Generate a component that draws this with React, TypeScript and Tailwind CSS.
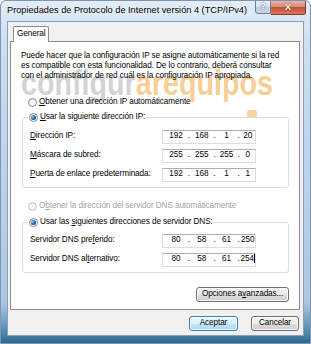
import React from 'react';

type Field = { label: React.ReactNode; parts: string[]; caret?: boolean };

function Radio({ checked, disabled }: { checked?: boolean; disabled?: boolean }) {
  return (
    <span
      className={`flex items-center justify-center w-[9px] h-[9px] rounded-full border shrink-0 ${
        disabled
          ? 'border-[#c4c4c4] bg-[#f4f4f4]'
          : 'border-[#7f8b96] bg-[linear-gradient(135deg,#e2e4e7,#ffffff_70%)]'
      }`}
    >
      {checked && (
        <span className="w-[5px] h-[5px] rounded-full bg-[radial-gradient(circle_at_35%_35%,#7fc4f4,#1b5ea8_55%,#0c3a73)]" />
      )}
    </span>
  );
}

function IpBox({ parts, caret }: { parts: string[]; caret?: boolean }) {
  const widths = ['w-[24px]', 'w-[24px]', 'w-[22px]', 'w-[16px]'];
  return (
    <div className="w-[94px] h-[14px] shrink-0 flex items-center whitespace-nowrap bg-white border border-[#d9dde4] border-t-[#abadb3] pl-[2px] text-black">
      {parts.map((p, i) => (
        <React.Fragment key={i}>
          {i > 0 && <span className="w-[4px] text-center">.</span>}
          <span className={`${widths[i]} text-center`}>
            {p}
            {caret && i === 3 && <span className="inline-block w-px h-[9px] bg-black align-middle -mt-px" />}
          </span>
        </React.Fragment>
      ))}
    </div>
  );
}

function Row({ label, parts, caret }: Field) {
  return (
    <div className="flex items-center h-[19px]">
      <span className="w-[132px] shrink-0 whitespace-nowrap">{label}</span>
      <IpBox parts={parts} caret={caret} />
    </div>
  );
}

function Button({ children, primary, className = '' }: { children: React.ReactNode; primary?: boolean; className?: string }) {
  return (
    <div
      className={`h-[15px] flex items-center justify-center whitespace-nowrap rounded-[3px] border text-black shadow-[inset_0_0_0_1px_rgba(255,255,255,0.8)] ${
        primary
          ? 'border-[#3c7fb1] bg-[linear-gradient(180deg,#eaf6fd_0%,#d9f0fc_50%,#bee6fd_51%,#a7d9f5_100%)]'
          : 'border-[#707070] bg-[linear-gradient(180deg,#f2f2f2_0%,#ebebeb_50%,#dddddd_51%,#cfcfcf_100%)]'
      } ${className}`}
    >
      {children}
    </div>
  );
}

const ipRows: Field[] = [
  { label: <><u>D</u>irección IP:</>, parts: ['192', '168', '1', '20'] },
  { label: <><u>M</u>áscara de subred:</>, parts: ['255', '255', '255', '0'] },
  { label: <><u>P</u>uerta de enlace predeterminada:</>, parts: ['192', '168', '1', '1'] },
];

const dnsRows: Field[] = [
  { label: <>Servidor DNS pre<u>f</u>erido:</>, parts: ['80', '58', '61', '250'] },
  { label: <>Servidor DNS al<u>t</u>ernativo:</>, parts: ['80', '58', '61', '254'], caret: true },
];

export default function App() {
  return (
    <div className="w-[311px] h-[344px] flex flex-col overflow-hidden rounded-t-[6px] border border-[#7d95b0] bg-[linear-gradient(180deg,#e2edf8_0%,#cddff1_12%,#bad1e9_55%,#adc7e2_88%,#4f88ad_97%,#2b6a8c_100%)] font-['Liberation_Sans',Arial,sans-serif] text-black">
      {/* Title bar */}
      <div className="h-[20px] flex items-start justify-between">
        <span className="pl-[6px] pt-[3px] text-[9.2px] leading-[13px] whitespace-nowrap text-black [text-shadow:0_0_4px_#ffffff]">
          Propiedades de Protocolo de Internet versión 4 (TCP/IPv4)
        </span>
        <div className="flex mr-[4px] -mt-px">
          <div className="w-[16px] h-[14px] flex items-center justify-center rounded-bl-[3px] border border-[#6d7f95] bg-[linear-gradient(180deg,#e9f0f8_0%,#d2deec_50%,#bccde2_51%,#c9d8ea_100%)] text-[9px] font-bold text-white [text-shadow:0_0_2px_#34475e]">
            ?
          </div>
          <div className="w-[35px] h-[15px] flex items-center justify-center rounded-br-[3px] border border-l-0 border-[#7a3a36] bg-[linear-gradient(180deg,#e8b3a6_0%,#d98a79_45%,#c5503a_50%,#d9775c_100%)] text-[9px] font-bold text-white [text-shadow:0_0_2px_#5a1e16]">
            X
          </div>
        </div>
      </div>

      {/* Client area */}
      <div className="mx-[6px] mb-[7px] flex-1 flex flex-col border border-[#8aa0b9] bg-[#f0f0f0] text-[8.2px] tracking-[-0.1px]">
        {/* Tab strip */}
        <div className="pt-[4px] pl-[5px] flex">
          <div className="relative z-10 -mb-px h-[16px] px-[3px] flex items-center bg-white border border-b-0 border-[#898c95] rounded-t-[2px]">
            General
          </div>
        </div>

        {/* Panel */}
        <div className="relative ml-[2px] mr-[3px] h-[269px] bg-white border border-[#898c95] pl-[11px] pr-[10px] pt-[9px] flex flex-col">
          {/* watermark */}
          <span className="pointer-events-none absolute left-[10px] top-[23px] origin-left [transform:scale(0.82,1)] text-[35px] leading-[35px] font-bold tracking-normal whitespace-nowrap opacity-50">
            <span className="text-[#a8a8a8]">configur</span>
            <span className="text-[#f0a030]">arequipos</span>
          </span>
          <span className="pointer-events-none absolute left-[236px] top-[68px] w-[10px] h-[8px] rounded-[2px] bg-[#f0a030] opacity-45" />

          <p className="relative -ml-px leading-[10px] whitespace-nowrap">
            Puede hacer que la configuración IP se asigne automáticamente si la red
            <br />
            es compatible con esta funcionalidad. De lo contrario, deberá consultar
            <br />
            con el administrador de red cuál es la configuración IP apropiada.
          </p>

          <div className="relative mt-[14px] h-[14px] flex items-center gap-[2px] pl-[6px]">
            <Radio />
            <span>
              <u>O</u>btener una dirección IP automáticamente
            </span>
          </div>

          <fieldset className="relative mt-px border border-[#d5dfe5] rounded-[3px] px-[7px] pb-[3px]">
            <legend className="ml-[-2px] px-[1px] h-[14px] flex items-center gap-[2px]">
              <Radio checked />
              <span>
                <u>U</u>sar la siguiente dirección IP:
              </span>
            </legend>
            <div className="pt-[3px]">
              {ipRows.map((r, i) => (
                <Row key={i} {...r} />
              ))}
            </div>
          </fieldset>

          <div className="relative mt-[11px] h-[14px] flex items-center gap-[2px] pl-[6px] text-[#a3a3a3]">
            <Radio disabled />
            <span>
              O<u>b</u>tener la dirección del servidor DNS automáticamente
            </span>
          </div>

          <fieldset className="relative mt-[2px] border border-[#d5dfe5] rounded-[3px] px-[7px] pb-[3px]">
            <legend className="ml-[-2px] px-[1px] h-[14px] flex items-center gap-[2px]">
              <Radio checked />
              <span>
                Usar las <u>s</u>iguientes direcciones de servidor DNS:
              </span>
            </legend>
            <div className="pt-[2px]">
              {dnsRows.map((r, i) => (
                <Row key={i} {...r} />
              ))}
            </div>
          </fieldset>

          <div className="mt-[14px] flex justify-end">
            <Button className="w-[93px]">
              Opciones a<u>v</u>anzadas...
            </Button>
          </div>
        </div>

        {/* Dialog buttons */}
        <div className="flex justify-end gap-[13px] pt-[6px] pr-[4px]">
          <Button primary className="w-[49px]">
            Aceptar
          </Button>
          <Button className="w-[48px]">Cancelar</Button>
        </div>
      </div>
    </div>
  );
}
